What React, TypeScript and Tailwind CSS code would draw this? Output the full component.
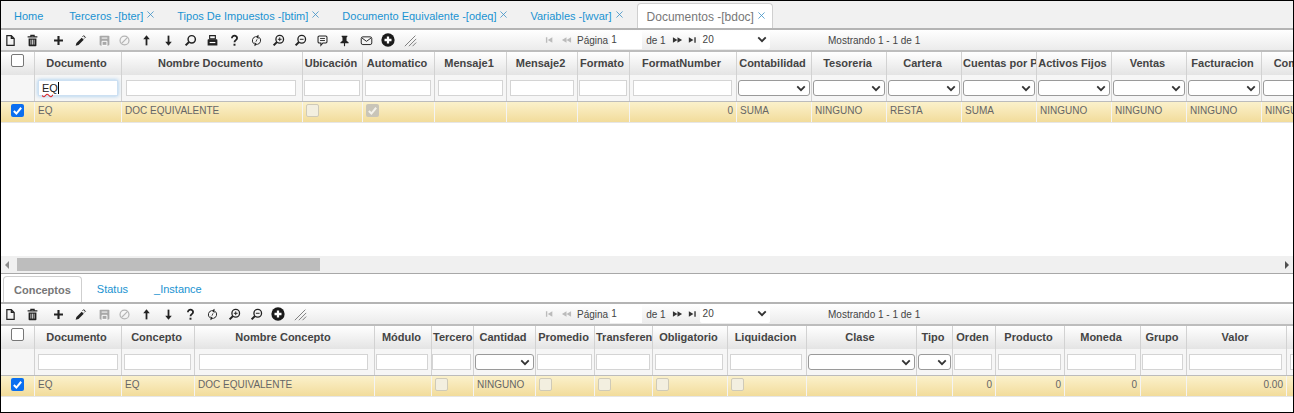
import { ReactNode } from 'react';

interface IColumn {
  title: string;
  w: string;
  pad?: string;
  filter?: 'input' | 'select';
  value?: string;
  kind?: 'check' | 'checkDisabled';
  right?: boolean;
  tight?: boolean;
}

const topColumns: IColumn[] = [
  { title: 'Documento', w: 'w-[87px]', value: 'EQ' },
  { title: 'Nombre Documento', w: 'w-[181px]', pad: 'pl-[4px] pr-[6px]', value: 'DOC EQUIVALENTE' },
  { title: 'Ubicación', w: 'w-[60px]', pad: 'pl-[1px] pr-[2px]', kind: 'check' },
  { title: 'Automatico', w: 'w-[72px]', pad: 'pl-[2px] pr-[3px]', kind: 'checkDisabled' },
  { title: 'Mensaje1', w: 'w-[72px]' },
  { title: 'Mensaje2', w: 'w-[71px]' },
  { title: 'Formato', w: 'w-[52px]', pad: 'pl-[1px] pr-[2px]' },
  { title: 'FormatNumber', w: 'w-[107px]', pad: 'pl-[3px] pr-[4px]', value: '0', right: true },
  { title: 'Contabilidad', w: 'w-[75px]', filter: 'select', value: 'SUMA' },
  { title: 'Tesoreria', w: 'w-[75px]', filter: 'select', value: 'NINGUNO' },
  { title: 'Cartera', w: 'w-[75px]', filter: 'select', value: 'RESTA' },
  { title: 'Cuentas por Pagar', w: 'w-[75px]', filter: 'select', value: 'SUMA', tight: true },
  { title: 'Activos Fijos', w: 'w-[75px]', filter: 'select', value: 'NINGUNO' },
  { title: 'Ventas', w: 'w-[75px]', filter: 'select', value: 'NINGUNO' },
  { title: 'Facturacion', w: 'w-[75px]', filter: 'select', value: 'NINGUNO' },
  { title: 'Compras', w: 'w-[75px]', filter: 'select', value: 'NINGUNO' },
];

const bottomColumns: IColumn[] = [
  { title: 'Documento', w: 'w-[87px]', value: 'EQ' },
  { title: 'Concepto', w: 'w-[73px]', pad: 'pl-[2px] pr-[3px]', value: 'EQ' },
  { title: 'Nombre Concepto', w: 'w-[180px]', pad: 'pl-[4px] pr-[6px]', value: 'DOC EQUIVALENTE' },
  { title: 'Módulo', w: 'w-[57px]', pad: 'pl-[1px] pr-[3px]' },
  { title: 'Tercero', w: 'w-[42px]', pad: 'pl-[0px] pr-[2px]', kind: 'check', tight: true },
  { title: 'Cantidad', w: 'w-[62px]', filter: 'select', value: 'NINGUNO' },
  { title: 'Promedio', w: 'w-[59px]', pad: 'pl-[1px] pr-[2px]', kind: 'check' },
  { title: 'Transferencia', w: 'w-[58px]', pad: 'pl-[1px] pr-[2px]', kind: 'check', tight: true },
  { title: 'Obligatorio', w: 'w-[75px]', pad: 'pl-[2px] pr-[4px]', kind: 'check' },
  { title: 'Liquidacion', w: 'w-[79px]', pad: 'pl-[2px] pr-[4px]', kind: 'check' },
  { title: 'Clase', w: 'w-[110px]', filter: 'select' },
  { title: 'Tipo', w: 'w-[36px]', filter: 'select' },
  { title: 'Orden', w: 'w-[43px]', pad: 'pl-[1px] pr-[3px]', value: '0', right: true },
  { title: 'Producto', w: 'w-[69px]', pad: 'pl-[2px] pr-[3px]', value: '0', right: true },
  { title: 'Moneda', w: 'w-[76px]', pad: 'pl-[2px] pr-[4px]', value: '0', right: true },
  { title: 'Grupo', w: 'w-[46px]', pad: 'pl-[1px] pr-[3px]' },
  { title: 'Valor', w: 'w-[100px]', pad: 'pl-[2px] pr-[4px]', value: '0.00', right: true },
  { title: 'Cuenta', w: 'w-[75px]' },
];

function Glyph({ children, className = 'text-[#222]' }: { children: ReactNode; className?: string }) {
  return (
    <svg viewBox="0 0 16 16" className={`w-[13px] h-[13px] ${className}`} fill="none" stroke="currentColor" strokeWidth="1.5">
      {children}
    </svg>
  );
}

const icons: Record<string, ReactNode> = {
  file: (
    <Glyph>
      <path d="M3.5 2h5.5l3.5 3.5V14h-9zM9 2v3.5h3.5" />
    </Glyph>
  ),
  trash: (
    <Glyph>
      <path d="M2 3.5h12M6 3V1.8h4V3" />
      <path d="M3.2 5.5h9.6V14a1 1 0 0 1-1 1H4.2a1 1 0 0 1-1-1z" fill="currentColor" stroke="none" />
      <path d="M6 7v6M8 7v6M10 7v6" stroke="#fff" strokeWidth="0.9" />
    </Glyph>
  ),
  plus: (
    <Glyph>
      <path d="M8 2.5v11M2.5 8h11" strokeWidth="2.6" />
    </Glyph>
  ),
  pencil: (
    <Glyph>
      <path d="M2 14.5l1-3.5 6.5-6.5 2.5 2.5L5.5 13.5z" fill="currentColor" stroke="none" />
      <path d="M10.5 3.5l1.5-1.5 2 2-1.5 1.5" strokeWidth="1.2" />
    </Glyph>
  ),
  save: (
    <Glyph className="text-[#a8a8a8]">
      <path d="M2 3a1 1 0 0 1 1-1h10a1 1 0 0 1 1 1v10a1 1 0 0 1-1 1H3a1 1 0 0 1-1-1z" fill="currentColor" stroke="none" />
      <path d="M4.5 5h7M5 9h6v5H5z" stroke="#fff" strokeWidth="1.2" />
    </Glyph>
  ),
  ban: (
    <Glyph className="text-[#b4b4b4]">
      <circle cx="8" cy="8" r="5.5" />
      <path d="M4.2 11.8l7.6-7.6" />
    </Glyph>
  ),
  up: (
    <Glyph>
      <path d="M8 14V4" strokeWidth="2.2" />
      <path d="M4 6.5L8 1.5l4 5z" fill="currentColor" stroke="none" />
    </Glyph>
  ),
  down: (
    <Glyph>
      <path d="M8 2v10" strokeWidth="2.2" />
      <path d="M4 9.5l4 5 4-5z" fill="currentColor" stroke="none" />
    </Glyph>
  ),
  search: (
    <Glyph>
      <circle cx="9.5" cy="6.5" r="4.5" strokeWidth="1.8" />
      <path d="M6 10l-4 4" strokeWidth="2.6" />
    </Glyph>
  ),
  print: (
    <Glyph>
      <path d="M4.5 2h7v4h-7z" strokeWidth="1.4" />
      <path d="M2 7.5a1 1 0 0 1 1-1h10a1 1 0 0 1 1 1V14H2z" fill="currentColor" stroke="none" />
      <path d="M4.5 10.5h7" stroke="#fff" strokeWidth="1.4" />
    </Glyph>
  ),
  help: (
    <Glyph>
      <path d="M4.8 5.2C4.8 3.2 6.2 2 8 2s3.2 1.2 3.2 3c0 2.6-3.2 2.6-3.2 5.2" strokeWidth="2.2" />
      <path d="M8 12v2.4" strokeWidth="2.4" />
    </Glyph>
  ),
  sync: (
    <Glyph>
      <path d="M7 3.2A5 5 0 0 0 4.8 12M9 12.8A5 5 0 0 0 11.2 4" strokeWidth="1.2" />
      <path d="M10.5 1v5l-3.5-2.5zM5.5 15v-5L9 12.5z" fill="currentColor" stroke="none" />
      <path d="M8.7 6.5L7.3 9.5" strokeWidth="1" />
    </Glyph>
  ),
  zoomIn: (
    <Glyph>
      <circle cx="9.5" cy="6.5" r="4.7" strokeWidth="1.6" />
      <path d="M6 10l-4 4" strokeWidth="2.6" />
      <path d="M9.5 4.2v4.6M7.2 6.5h4.6" strokeWidth="1.2" />
    </Glyph>
  ),
  zoomOut: (
    <Glyph>
      <circle cx="9.5" cy="6.5" r="4.7" strokeWidth="1.6" />
      <path d="M6 10l-4 4" strokeWidth="2.6" />
      <path d="M7.2 6.5h4.6" strokeWidth="1.2" />
    </Glyph>
  ),
  comment: (
    <Glyph>
      <path d="M2.5 4a1.5 1.5 0 0 1 1.5-1.5h8A1.5 1.5 0 0 1 13.5 4v5.5A1.5 1.5 0 0 1 12 11H8.5L6 14v-3H4a1.5 1.5 0 0 1-1.5-1.5z" strokeWidth="1.3" />
      <path d="M5 5.5h6M5 8h6" strokeWidth="1.1" />
    </Glyph>
  ),
  pin: (
    <Glyph>
      <path d="M4.5 2h7v1.5l-1 .8v4l2.5 2V11.5H3V10.3l2.5-2v-4l-1-.8z" fill="currentColor" stroke="none" />
      <path d="M8 11v4" strokeWidth="1.4" />
    </Glyph>
  ),
  mail: (
    <Glyph>
      <rect x="1.5" y="3.5" width="13" height="9.5" rx="2" strokeWidth="1.2" />
      <path d="M2.5 5l5.5 4 5.5-4" strokeWidth="1.2" />
    </Glyph>
  ),
  plusCircle: (
    <svg viewBox="0 0 16 16" className="w-[14px] h-[14px]">
      <circle cx="8" cy="8" r="7.6" fill="#1a1a1a" />
      <path d="M8 4v8M4 8h8" stroke="#fff" strokeWidth="2.6" />
    </svg>
  ),
  hatch: (
    <Glyph className="text-[#555]">
      <path d="M1 15L14 2M6 15l9-9M10.5 15l4.5-4.5" strokeWidth="0.9" />
    </Glyph>
  ),
};

function Chevron({ className = '' }: { className?: string }) {
  return (
    <svg viewBox="0 0 12 8" className={`w-[10px] h-[7px] text-[#333] ${className}`} fill="none" stroke="currentColor" strokeWidth="2.2">
      <path d="M1.5 1.5L6 6l4.5-4.5" />
    </svg>
  );
}

function Toolbar({ items }: { items: string[] }) {
  return (
    <div className="relative flex items-center h-[20px] bg-gradient-to-b from-white to-[#ebebeb] border-b-2 border-[#bdbdbd] box-content">
      <div className="flex items-center -ml-[2px]">
        {items.map((name, index) => (
          <span key={index} className={`flex justify-center w-[22px] ${index === 2 ? 'ml-[4px]' : ''} ${index === 4 ? 'ml-[2px]' : ''} ${index === 5 ? '-ml-[2px]' : ''}`}>
            {icons[name]}
          </span>
        ))}
      </div>
      <div className="absolute left-[544px] top-0 h-full flex items-center text-[10px] text-[#444]">
        <svg viewBox="0 0 12 8" className="w-[11px] h-[8px] text-[#bbb]" fill="currentColor">
          <path d="M1 1h1.5v6H1zM8 1v6L3 4z" />
        </svg>
        <svg viewBox="0 0 12 8" className="w-[11px] h-[8px] ml-[5px] text-[#bbb]" fill="currentColor">
          <path d="M6 1v6L1 4zM11 1v6L6 4z" />
        </svg>
        <span className="ml-[5px]">Página</span>
        <span className="ml-[2px] w-[32px] h-[18px] bg-white pl-[1px] leading-[18px]">1</span>
        <span className="ml-[4px]">de 1</span>
        <svg viewBox="0 0 12 8" className="w-[11px] h-[8px] ml-[6px] text-[#333]" fill="currentColor">
          <path d="M1 1v6l5-3zM6 1v6l5-3z" />
        </svg>
        <svg viewBox="0 0 12 8" className="w-[11px] h-[8px] ml-[4px] text-[#333]" fill="currentColor">
          <path d="M2 1v6l5-3zM8 1h1.5v6H8z" />
        </svg>
        <span className="relative ml-[2px] w-[70px] h-[18px] bg-white pl-[3px] leading-[18px] rounded-[2px]">
          20
          <Chevron className="absolute right-[3px] top-[5px]" />
        </span>
      </div>
      <span className="absolute left-[827px] top-0 h-full flex items-center text-[10px] text-[#444]">Mostrando 1 - 1 de 1</span>
    </div>
  );
}

function Checkbox({ variant }: { variant: 'empty' | 'blue' | 'check' | 'checkDisabled' }) {
  if (variant === 'blue') {
    return (
      <span className="flex items-center justify-center w-[13px] h-[13px] rounded-[2px] bg-[#0b6ff0]">
        <svg viewBox="0 0 12 12" className="w-[11px] h-[11px]" fill="none" stroke="#fff" strokeWidth="2.2">
          <path d="M2 6.5l2.8 2.8L10 3" />
        </svg>
      </span>
    );
  }
  if (variant === 'checkDisabled') {
    return (
      <span className="flex items-center justify-center w-[13px] h-[13px] rounded-[2px] bg-[#c9c5b8]">
        <svg viewBox="0 0 12 12" className="w-[11px] h-[11px]" fill="none" stroke="#f4f2ea" strokeWidth="2.2">
          <path d="M2 6.5l2.8 2.8L10 3" />
        </svg>
      </span>
    );
  }
  if (variant === 'check') {
    return <span className="block w-[13px] h-[13px] rounded-[2px] border border-[#cfcab8] bg-[#f3efe0]" />;
  }
  return <span className="block w-[13px] h-[13px] rounded-[2px] border border-[#777] bg-white" />;
}

function Grid({ columns, first }: { columns: IColumn[]; first?: boolean }) {
  return (
    <div className="flex flex-col">
      <div className="flex h-[23px] bg-gradient-to-b from-white to-[#e4e4e4]">
        <div className="flex shrink-0 justify-center pt-[2px] w-[34px] border-r border-[#d2d2d2]">
          <Checkbox variant="empty" />
        </div>
        {columns.map((col) => (
          <div key={col.title} className={`shrink-0 ${col.w} border-r border-[#d2d2d2] overflow-hidden whitespace-nowrap text-[11px] font-bold text-[#444] leading-[22px] ${col.tight ? 'pl-[1px]' : 'text-center pr-[3px]'}`}>
            {col.title}
          </div>
        ))}
      </div>
      <div className="flex h-[27px] bg-[#f6f6f6] border-b border-[#bcbcbc]">
        <div className="shrink-0 w-[34px] border-r border-[#d2d2d2]" />
        {columns.map((col, index) => (
          <div key={col.title} className={`shrink-0 ${col.w} border-r border-[#d2d2d2] ${col.filter === 'select' ? 'px-[1px]' : (col.pad ?? 'px-[3px]')} pt-[5px]`}>
            {col.filter === 'select' ? (
              <div className="flex items-center justify-end h-[16px] pr-[3px] bg-white border border-[#9a9a9a] rounded-[3px]">
                <Chevron />
              </div>
            ) : first && index === 0 ? (
              <div className="h-[16px] pl-[3px] bg-white border border-[#cde0f2] shadow-[0_0_4px_#9cc8ee] text-[11px] leading-[15px] text-[#222]">
                <span className="underline decoration-wavy decoration-[#d22] border-r border-black">EQ</span>
              </div>
            ) : (
              <div className="h-[16px] bg-white border border-[#d4d4d4]" />
            )}
          </div>
        ))}
      </div>
      <div className="flex h-[20px] bg-gradient-to-b from-[#fbf1cb] to-[#f2dc9b] border-b border-[#e6e6e6] box-content text-[10px] text-[#666]">
        <div className="flex shrink-0 justify-center items-center pb-[3px] w-[34px] border-r border-[#f4f4f4]">
          <Checkbox variant="blue" />
        </div>
        {columns.map((col) => (
          <div key={col.title} className={`flex shrink-0 items-center ${col.w} border-r border-[#f4f4f4] overflow-hidden whitespace-nowrap px-[3px] pb-[3px] ${col.right ? 'justify-end' : ''}`}>
            {col.kind === 'check' && <Checkbox variant="check" />}
            {col.kind === 'checkDisabled' && <Checkbox variant="checkDisabled" />}
            {!col.kind && col.value}
          </div>
        ))}
      </div>
    </div>
  );
}

function CloseMark() {
  return (
    <svg viewBox="0 0 8 8" className="ml-[4px] -mt-[3px] w-[7px] h-[7px] text-[#3b8fc4]" fill="none" stroke="currentColor" strokeWidth="0.9">
      <path d="M0.5 0.5l7 7M7.5 0.5l-7 7" />
    </svg>
  );
}

function TabLabel({ label, close = true, margin = '' }: { label: string; close?: boolean; margin?: string }) {
  return (
    <span className={`flex items-center h-full pt-[1px] text-[11px] text-[#1a93d1] ${margin}`}>
      {label}
      {close && <CloseMark />}
    </span>
  );
}

function App() {
  return (
    <div className="w-[1294px] h-[413px] overflow-hidden bg-white border border-black font-['Liberation_Sans',Arial,sans-serif] flex flex-col">
      <div className="flex items-end h-[27px] bg-[#f1f1f1] border-b-2 border-[#b4b4b4] box-content pl-[13px]">
        <div className="flex h-[25px]">
          <TabLabel label="Home" close={false} />
          <TabLabel label="Terceros -[bter]" margin="ml-[26px]" />
          <TabLabel label="Tipos De Impuestos -[btim]" margin="ml-[23px]" />
          <TabLabel label="Documento Equivalente -[odeq]" margin="ml-[23px]" />
          <TabLabel label="Variables -[wvar]" margin="ml-[23px]" />
          <span className="flex items-center ml-[14px] pl-[9px] pr-[7px] pt-[1px] bg-white border border-b-0 border-[#cfcfcf] rounded-t-[4px] text-[12px] text-[#777]">
            Documentos -[bdoc]
            <CloseMark />
          </span>
        </div>
      </div>
      <Toolbar items={['file', 'trash', 'plus', 'pencil', 'save', 'ban', 'up', 'down', 'search', 'print', 'help', 'sync', 'zoomIn', 'zoomOut', 'comment', 'pin', 'mail', 'plusCircle', 'hatch']} />
      <div className="h-[204px] overflow-hidden">
        <Grid columns={topColumns} first />
      </div>
      <div className="relative flex items-center justify-between h-[17px] bg-[#f0f0f0] border-b border-[#a8a8a8] box-content px-[4px]">
        <span className="w-0 h-0 border-y-[4px] border-y-transparent border-r-[4px] border-r-[#8a8a8a]" />
        <div className="absolute left-[16px] top-[2px] w-[303px] h-[13px] bg-[#bdbdbd]" />
        <span className="w-0 h-0 border-y-[4px] border-y-transparent border-l-[4px] border-l-[#505050]" />
      </div>
      <div className="flex items-end h-[28px] bg-white border-b-2 border-[#b4b4b4] box-content pl-[2px]">
        <div className="flex h-[26px]">
          <span className="flex items-center pt-[1px] px-[10px] bg-white border border-b-0 border-[#cfcfcf] rounded-t-[4px] text-[11px] font-bold text-[#777]">Conceptos</span>
          <TabLabel label="Status" close={false} margin="ml-[15px]" />
          <TabLabel label="_Instance" close={false} margin="ml-[26px]" />
        </div>
      </div>
      <Toolbar items={['file', 'trash', 'plus', 'pencil', 'save', 'ban', 'up', 'down', 'help', 'sync', 'zoomIn', 'zoomOut', 'plusCircle', 'hatch']} />
      <div className="flex-1 overflow-hidden">
        <Grid columns={bottomColumns} />
      </div>
    </div>
  );
}

export default App;
